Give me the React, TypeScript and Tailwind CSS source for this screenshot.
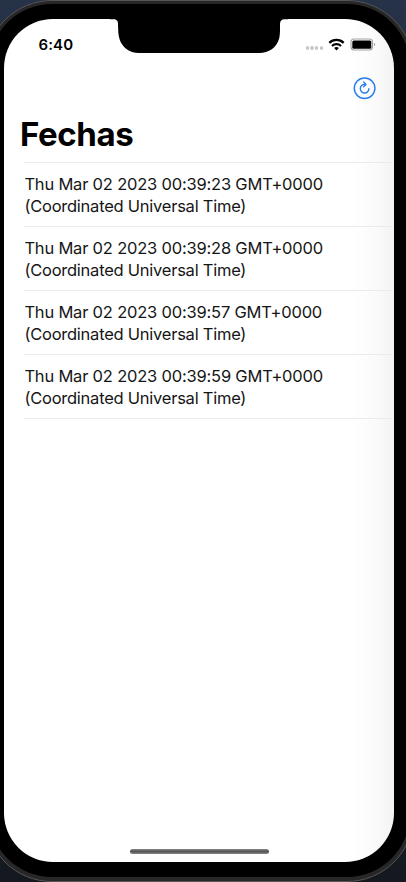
const dates = [
  "Thu Mar 02 2023 00:39:23 GMT+0000",
  "Thu Mar 02 2023 00:39:28 GMT+0000",
  "Thu Mar 02 2023 00:39:57 GMT+0000",
  "Thu Mar 02 2023 00:39:59 GMT+0000",
];

function Notch() {
  return (
    <svg className="absolute left-[106px] top-[-1px]" width="178" height="36" viewBox="110 18 178 36">
      <path
        d="M110 18V19.3H113.5C116.8 19.3 117.9 20.8 118 24C118.2 30 118.1 34.500 119.500 39C122 47 129 53 139 53H259C269 53 276.500 47.500 279 39C280.200 35 280 29 280 24C280.200 20.800 281.500 19.300 284.500 19.300H288V18Z"
        fill="#000"
      />
    </svg>
  );
}

function StatusBar() {
  return (
    <div className="flex h-[50px] items-center pl-[34.500px] pr-[18px]">
      <span className="mt-px text-[15px] font-semibold leading-5 tracking-[0.1px]">6:40</span>
      <div className="ml-auto flex items-center">
        <div className="mr-[5px] mt-[8px] flex gap-[1.500px]">
          {[0, 1, 2, 3].map((i) => (
            <span key={i} className="size-[3.200px] rounded-full bg-[#c8c8c8]" />
          ))}
        </div>
        <svg width="17" height="13" viewBox="0 0 17 13" fill="none" stroke="#000" strokeWidth="2.200">
          <path d="M1.300 4.900C5.300 .900 11.700 .900 15.700 4.900" />
          <path d="M4 8C6.500 5.600 10.500 5.600 13 8" />
          <path d="M8.500 12.400L6.100 10C7.500 8.800 9.500 8.800 10.900 10Z" fill="#000" stroke="none" />
        </svg>
        <svg className="ml-[5px]" width="26" height="13" viewBox="0 0 26 13">
          <rect x="1" y="1" width="21.500" height="11" rx="3" fill="#fff" stroke="#a2a2a2" strokeWidth="1.100" />
          <rect x="2.300" y="2.400" width="19" height="8.300" rx="1.500" fill="#000" />
          <path d="M24 4.700C25.600 5.500 25.600 7.500 24 8.300Z" fill="#a2a2a2" />
        </svg>
      </div>
    </div>
  );
}

function RefreshIcon() {
  return (
    <svg width="24" height="24" viewBox="0 0 24 24" fill="none" stroke="#2b7df0" strokeLinecap="round" strokeLinejoin="round">
      <circle cx="11.600" cy="12.200" r="10.300" strokeWidth="1.500" />
      <path d="M11.800 8.400A4.300 4.300 0 1 0 15.900 12.600" strokeWidth="1.400" />
      <path d="M10.700 6.100L13 8.400L10.700 10.700" strokeWidth="1.400" />
    </svg>
  );
}

export default function App() {
  return (
    <div className="h-[882px] w-[406px] overflow-hidden bg-gradient-to-b from-[#263247] to-[#15191f] font-['Inter',sans-serif] text-black">
      <div className="-ml-[15px] h-[882px] w-[429px] rounded-[67px] border border-[#555] bg-[#272727] p-[3px] pb-1">
        <div className="h-full rounded-[63px] bg-black px-[15px] pt-[15px]">
          <main className="relative flex h-[843px] w-[390px] flex-col overflow-hidden rounded-[49px] bg-[linear-gradient(to_right,#fff_89%,#fbfbfb_95%,#f3f3f3)]">
            <Notch />
            <StatusBar />
            <div className="flex h-[38px] items-center justify-end pr-[17px]">
              <button aria-label="Actualizar">
                <RefreshIcon />
              </button>
            </div>
            <h1 className="ml-4 mt-[6px] whitespace-nowrap text-[33px] font-bold leading-[42px] tracking-[-0.4px]">Fechas</h1>
            <ul className="ml-5 mt-[7px] border-t border-[#ebebeb]">
              {dates.map((date) => (
                <li key={date} className="h-16 whitespace-nowrap border-b border-[#ebebeb] pl-[0.400px] pt-[9.500px] text-[16.500px] leading-[22px] text-[#151515]">
                  <p className="tracking-[-0.200px]">{date}</p>
                  <p className="tracking-[-0.240px]">(Coordinated Universal Time)</p>
                </li>
              ))}
            </ul>
            <div className="mx-auto mb-[8px] mt-auto h-[5px] w-[139px] rounded-full bg-gradient-to-b from-[#888] via-[#555] to-[#888]" />
          </main>
        </div>
      </div>
    </div>
  );
}
